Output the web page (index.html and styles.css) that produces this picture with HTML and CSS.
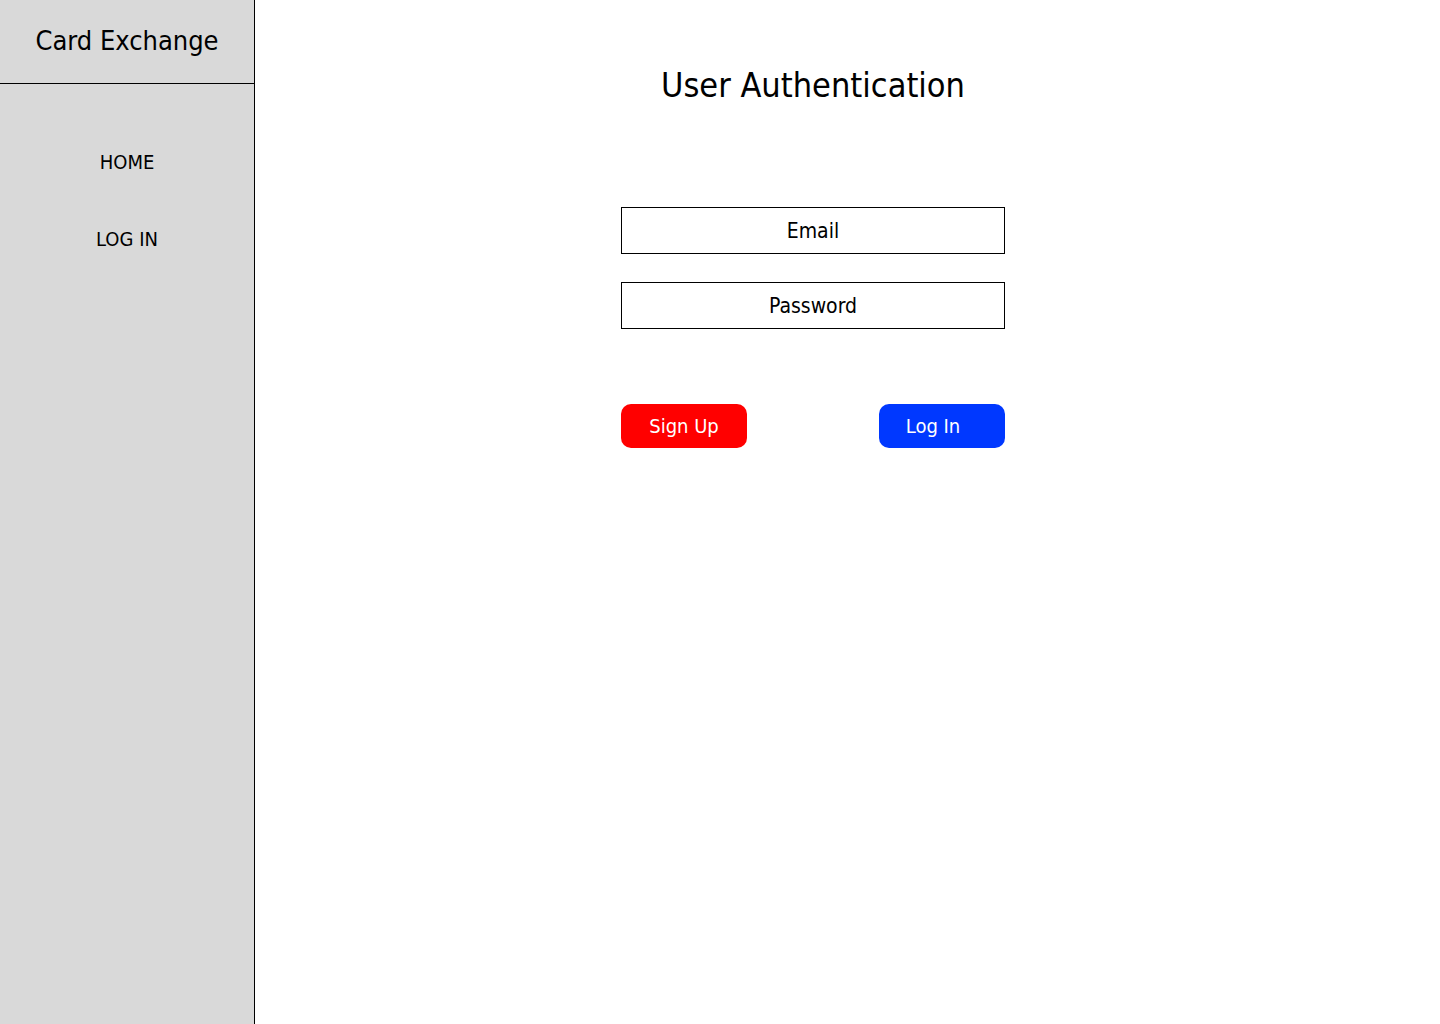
FILE: index.html
```html
<!DOCTYPE html>
<html>
<head>
<meta charset="utf-8">
<link rel="stylesheet" href="styles.css">
<title>Card Exchange</title>
</head>
<body>
<div class="app">
  <aside class="sidebar">
    <div class="brand">Card Exchange</div>
    <nav class="nav">
      <a class="nav-item">HOME</a>
      <a class="nav-item">LOG IN</a>
    </nav>
  </aside>
  <main class="main">
    <h1 class="title">User Authentication</h1>
    <form class="form">
      <div class="field">Email</div>
      <div class="field">Password</div>
      <div class="actions">
        <button type="button" class="btn btn-red">Sign Up</button>
        <button type="button" class="btn btn-blue">Log In</button>
      </div>
    </form>
  </main>
</div>
</body>
</html>
```
FILE: styles.css
```css
* { box-sizing: border-box; }
html, body { margin: 0; padding: 0; height: 100%; }
body {
  font-family: "DejaVu Sans Condensed", "DejaVu Sans", sans-serif;
  color: #000;
  background: #fff;
}
.app { display: flex; height: 1024px; }
.sidebar {
  width: 255px;
  background: #d9d9d9;
  border-right: 1px solid #000;
  display: flex;
  flex-direction: column;
}
.brand {
  height: 84px;
  border-bottom: 1px solid #000;
  display: flex;
  align-items: center;
  justify-content: center;
  font-size: 27px;
  padding-bottom: 2px;
}
.nav {
  display: flex;
  flex-direction: column;
  align-items: center;
  padding-top: 65px;
  gap: 51px;
}
.nav-item { font-size: 20px; line-height: 26px; }
.main {
  flex: 1;
  display: flex;
  flex-direction: column;
  align-items: center;
  padding-right: 69px;
}
.title {
  font-weight: normal;
  font-size: 34px;
  margin: 62px 0 0;
  line-height: 46px;
}
.form {
  width: 384px;
  margin-top: 99px;
  display: flex;
  flex-direction: column;
}
.field {
  height: 47px;
  border: 1px solid #000;
  display: flex;
  align-items: center;
  justify-content: center;
  font-size: 21px;
  margin-bottom: 28px;
}
.actions {
  display: flex;
  justify-content: space-between;
  margin-top: 47px;
}
.btn {
  width: 126px;
  height: 44px;
  border: none;
  border-radius: 10px;
  color: #fff;
  font-family: inherit;
  font-size: 20px;
  padding: 0;
}
.btn-red { background: #ff0000; }
.btn-blue { background: #0038ff; padding-right: 18px; }
```
